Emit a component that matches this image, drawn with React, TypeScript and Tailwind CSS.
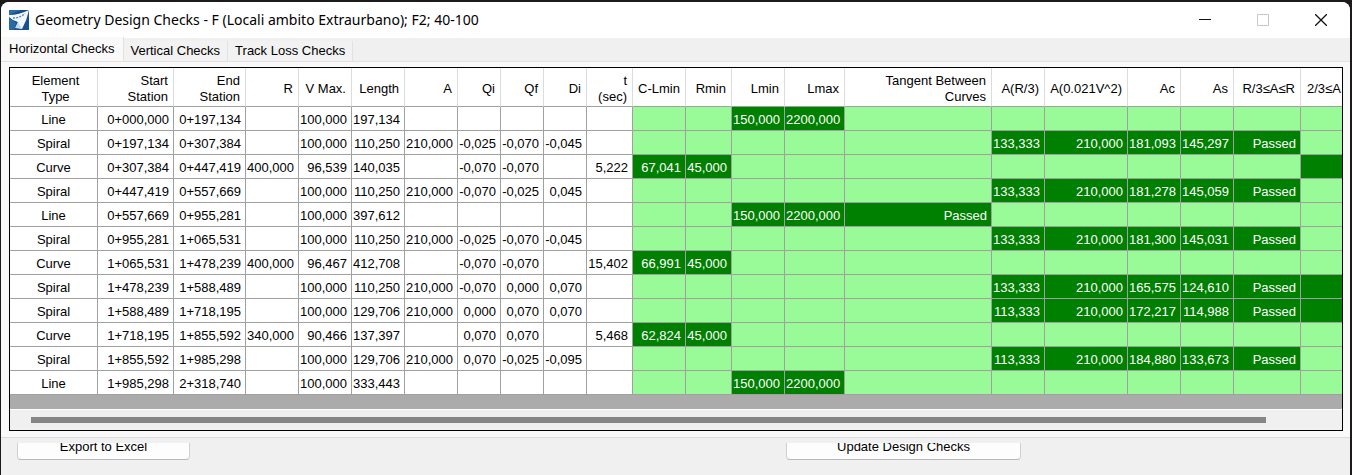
import { useState } from 'react';

type Column = { label: string; col: string; check?: boolean };

const columns: Column[] = [
  { label: 'Element\nType', col: 'w-[88px]' },
  { label: 'Start\nStation', col: 'w-[76px]' },
  { label: 'End\nStation', col: 'w-[72px]' },
  { label: 'R', col: 'w-[53px]' },
  { label: 'V Max.', col: 'w-[53px]' },
  { label: 'Length', col: 'w-[53px]' },
  { label: 'A', col: 'w-[53px]' },
  { label: 'Qi', col: 'w-[43px]' },
  { label: 'Qf', col: 'w-[43px]' },
  { label: 'Di', col: 'w-[43px]' },
  { label: 't\n(sec)', col: 'w-[46px]' },
  { label: 'C-Lmin', col: 'w-[53px]', check: true },
  { label: 'Rmin', col: 'w-[46px]', check: true },
  { label: 'Lmin', col: 'w-[53px]', check: true },
  { label: 'Lmax', col: 'w-[60px]', check: true },
  { label: 'Tangent Between\nCurves', col: 'w-[147px]', check: true },
  { label: 'A(R/3)', col: 'w-[53px]', check: true },
  { label: 'A(0.021V^2)', col: 'w-[83px]', check: true },
  { label: 'Ac', col: 'w-[53px]', check: true },
  { label: 'As', col: 'w-[53px]', check: true },
  { label: 'R/3≤A≤R', col: 'w-[67px]', check: true },
  { label: '2/3≤A', col: 'w-[52px]', check: true },
];

// A check cell holds null when the check does not apply to the element.
const N = null;
const rows: (string | null)[][] = [
  ['Line', '0+000,000', '0+197,134', '', '100,000', '197,134', '', '', '', '', '', N, N, '150,000', '2200,000', N, N, N, N, N, N, N],
  ['Spiral', '0+197,134', '0+307,384', '', '100,000', '110,250', '210,000', '-0,025', '-0,070', '-0,045', '', N, N, N, N, N, '133,333', '210,000', '181,093', '145,297', 'Passed', N],
  ['Curve', '0+307,384', '0+447,419', '400,000', '96,539', '140,035', '', '-0,070', '-0,070', '', '5,222', '67,041', '45,000', N, N, N, N, N, N, N, N, ''],
  ['Spiral', '0+447,419', '0+557,669', '', '100,000', '110,250', '210,000', '-0,070', '-0,025', '0,045', '', N, N, N, N, N, '133,333', '210,000', '181,278', '145,059', 'Passed', N],
  ['Line', '0+557,669', '0+955,281', '', '100,000', '397,612', '', '', '', '', '', N, N, '150,000', '2200,000', 'Passed', N, N, N, N, N, N],
  ['Spiral', '0+955,281', '1+065,531', '', '100,000', '110,250', '210,000', '-0,025', '-0,070', '-0,045', '', N, N, N, N, N, '133,333', '210,000', '181,300', '145,031', 'Passed', N],
  ['Curve', '1+065,531', '1+478,239', '400,000', '96,467', '412,708', '', '-0,070', '-0,070', '', '15,402', '66,991', '45,000', N, N, N, N, N, N, N, N, N],
  ['Spiral', '1+478,239', '1+588,489', '', '100,000', '110,250', '210,000', '-0,070', '0,000', '0,070', '', N, N, N, N, N, '133,333', '210,000', '165,575', '124,610', 'Passed', ''],
  ['Spiral', '1+588,489', '1+718,195', '', '100,000', '129,706', '210,000', '0,000', '0,070', '0,070', '', N, N, N, N, N, '113,333', '210,000', '172,217', '114,988', 'Passed', ''],
  ['Curve', '1+718,195', '1+855,592', '340,000', '90,466', '137,397', '', '0,070', '0,070', '', '5,468', '62,824', '45,000', N, N, N, N, N, N, N, N, N],
  ['Spiral', '1+855,592', '1+985,298', '', '100,000', '129,706', '210,000', '0,070', '-0,025', '-0,095', '', N, N, N, N, N, '113,333', '210,000', '184,880', '133,673', 'Passed', N],
  ['Line', '1+985,298', '2+318,740', '', '100,000', '333,443', '', '', '', '', '', N, N, '150,000', '2200,000', N, N, N, N, N, N, N],
];

function cellColor(column: Column, value: string | null) {
  if (!column.check) return 'bg-white text-black';
  return value === null ? 'bg-[#98fb98]' : 'bg-[#008000] text-white';
}

function headerAlign(index: number) {
  if (index === 0) return 'pl-2 pr-1 text-center';
  if (index === columns.length - 1) return 'pl-1.5 text-left';
  return 'pl-1 pr-[5px] text-right';
}

function TitleBar() {
  return (
    <header className="flex h-9 items-center bg-white pl-2">
      <svg viewBox="0 0 20 20" className="mr-1.5 size-5" aria-hidden="true">
        <rect width="20" height="20" fill="#17508c" />
        <path d="M0 0H12L0 5Z" fill="#2c6da8" />
        <path d="M0 8 7 13 5 20H0Z" fill="#2a6aa4" />
        <path d="M0 5Q10 5 20 0Q18 10 13 19L7 17L9 12Q4 11 0 7Z" fill="#f2f7fb" />
        <path d="M4 8Q11 8 16 3.5" fill="none" stroke="#5482ab" strokeWidth="1.4" strokeDasharray="2 1.2" />
        <path d="M9 12 13 19 6 18Z" fill="#c4d9ea" />
      </svg>
      <h1 className="flex-1 font-['Noto_Sans',sans-serif] text-sm text-black">
        Geometry Design Checks - F (Locali ambito Extraurbano); F2; 40-100
      </h1>
      <div className="flex">
        <button aria-label="Minimize" className="flex h-9 w-[58px] items-center justify-center">
          <svg width="12" height="12" viewBox="0 0 12 12"><path d="M0 5.5H12" stroke="#111" /></svg>
        </button>
        <button aria-label="Maximize" disabled className="flex h-9 w-[58px] items-center justify-center">
          <svg width="12" height="12" viewBox="0 0 12 12"><path d="M.5.5H11.5V11.5H.5Z" fill="none" stroke="#c8c8c8" /></svg>
        </button>
        <button aria-label="Close" className="flex h-9 w-[58px] items-center justify-center">
          <svg width="12" height="12" viewBox="0 0 12 12"><path d="M0 0 12 12M12 0 0 12" stroke="#111" strokeWidth="1.3" /></svg>
        </button>
      </div>
    </header>
  );
}

const tabs = ['Horizontal Checks', 'Vertical Checks', 'Track Loss Checks'];

export default function App() {
  const [active, setActive] = useState(0);

  return (
    <div className="min-h-screen bg-[#1c1a1a] pt-0.5 pr-0.5 pl-px font-['Liberation_Sans',Arial,sans-serif] text-[13px] text-black">
      <div className="flex min-h-[calc(100vh-2px)] flex-col overflow-hidden rounded-t-lg bg-[#f0f0f0]">
        <TitleBar />
        <div role="tablist" className="flex h-6 items-end border-b border-[#e2e2e2] bg-[#f0f0f0]">
          {tabs.map((tab, i) => (
            <button
              key={tab}
              role="tab"
              aria-selected={i === active}
              onClick={() => setActive(i)}
              className={
                i === active
                  ? 'h-6 border-r border-[#e2e2e2] bg-[#f9f9f9] px-2'
                  : 'h-5 border-r border-[#e2e2e2] bg-[#f2f2f2] px-[7px]'
              }
            >
              {tab}
            </button>
          ))}
        </div>
        <main className="border-b border-[#dcdcdc] bg-[#f9f9f9] pt-[5px] pr-[7px] pb-1.5 pl-2">
          <div className="border border-black bg-[#f0f0f0]">
            <div className="overflow-x-auto bg-[#ababab] pb-3.5 [scrollbar-width:none]">
              <table className="w-[1343px] min-w-full table-fixed border-separate border-spacing-0">
                <colgroup>
                  {columns.map((c) => <col key={c.label} className={c.col} />)}
                </colgroup>
                <thead>
                  <tr className="h-[39px] bg-white">
                    {columns.map((c, i) => (
                      <th
                        key={c.label}
                        scope="col"
                        className={`border-r border-b border-r-[#dcdcdc] border-b-[#a0a0a0] pt-[3px] pb-0 leading-4 font-normal whitespace-pre ${headerAlign(i)}`}
                      >
                        {c.label}
                      </th>
                    ))}
                  </tr>
                </thead>
                <tbody>
                  {rows.map((row) => (
                    <tr key={row[1]} className="h-6">
                      {row.map((value, i) => (
                        <td
                          key={columns[i].label}
                          className={`border-r border-b border-[#a0a0a0] pt-0.5 pr-1 pb-0 leading-5 whitespace-nowrap ${i === 0 ? 'pl-1 text-center' : 'pl-px text-right'} ${cellColor(columns[i], value)}`}
                        >
                          {value}
                        </td>
                      ))}
                    </tr>
                  ))}
                </tbody>
              </table>
            </div>
            <div className="flex h-[21px] items-center border-t border-white pr-[76px] pl-[21px]">
              <div className="h-1.5 flex-1 bg-[#868686]" />
            </div>
          </div>
        </main>
        <footer className="flex pt-[5px] pl-4">
          <div className="flex h-[17px] flex-1 items-end overflow-hidden">
            <button className="h-[27px] w-[173px] shrink-0 rounded border border-[#d0d0d0] border-b-[#b8b8b8] bg-[#fdfdfd]">
              Export to Excel
            </button>
          </div>
          <div className="flex h-[17px] w-[564px] items-end overflow-hidden">
            <button className="h-[27px] w-[235px] shrink-0 rounded border border-[#d0d0d0] border-b-[#b8b8b8] bg-[#fdfdfd]">
              Update Design Checks
            </button>
          </div>
        </footer>
      </div>
    </div>
  );
}
